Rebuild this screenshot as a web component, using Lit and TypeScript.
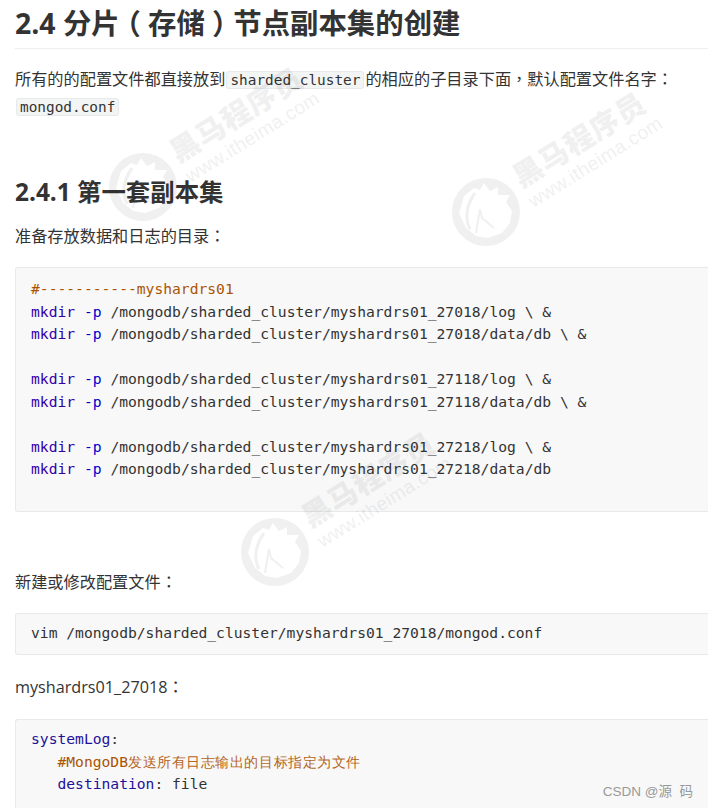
import { LitElement, html, css } from "lit";
import { customElement } from "lit/decorators.js";

const mark = (x: number, y: number) => html`<div class="wm" style="left:${x}px;top:${y}px">
  <svg class="logo" viewBox="0 0 68 68" width="68" height="68">
    <path fill-rule="evenodd" d="M34 0a34 34 0 1 0 0 68a34 34 0 1 0 0-68Z M7 35L12 18L22 10L28 12L32 5L38 13L46 9L46 17L58 17L54 24L60 33L58 45L50 55L36 60L24 58L14 50Z"></path>
    <path d="M23 15C15 26 12 40 18 51" fill="none" stroke="#000" stroke-width="3"></path>
    <path d="M28 31L24 55M28 31L30 40L42 50" fill="none" stroke="#000" stroke-width="2"></path>
  </svg>
  <div class="wmt"><div class="cn">黑马程序员</div><div class="en">www.itheima.com</div></div>
</div>`;

const mk = (rest: string) => html`<span class="k">mkdir</span> <span class="f">-p</span> ${rest}`;

@customElement("app-root")
export class AppRoot extends LitElement {
  static styles = css`
    :host { display: block; width: 708px; height: 808px; overflow: hidden; position: relative; background: #fff; color: #333;
      font-family: "Open Sans", "Noto Sans CJK SC", sans-serif; font-size: 16.2px; }
    .page { padding: 0 0 0 15px; }
    h2 { margin: 0; height: 49px; box-sizing: border-box; padding-top: 8px; font-size: 28.4px; line-height: 30px; font-weight: 700; border-bottom: 1px solid #eee; }
    h3 { margin: 0; padding-top: 55px; font-size: 24.4px; line-height: 34px; font-weight: 700; }
    p { margin: 0; line-height: 26px; }
    .pn { font-family: "Noto Sans CJK TC", sans-serif; }
    .par { display: inline-block; width: 1em; height: 30px; line-height: 30px; vertical-align: top; text-align: center; font-family: "Noto Sans CJK TC", sans-serif; font-feature-settings: "halt"; }
    .p1 { padding-top: 16px; }
    .p2 { padding-top: 13px; }
    .p3 { padding-top: 56px; }
    .p4 { padding-top: 18px; }
    code, pre { font-family: "DejaVu Sans Mono", monospace; }
    code { font-size: 14.4px; background: #f3f4f4; border: 1px solid #e7eaed; border-radius: 3px; padding: 0 3px; margin: 0 1px; }
    pre { margin: 0; background: #f8f8f8; border: 1px solid #e7eaed; border-right: 0; border-radius: 3px 0 0 3px; font-size: 14.65px; line-height: 22.5px; padding: 10px 15px; color: #333; }
    .b1 { margin-top: 18px; height: 245px; box-sizing: border-box; }
    .b2 { margin-top: 18px; height: 42px; box-sizing: border-box; padding-top: 8px; }
    .b3 { margin-top: 19px; height: 100px; box-sizing: border-box; padding-top: 8px; }
    .k { color: #3300aa; }
    .f { color: #0000cc; }
    .c { color: #aa5500; }
    .cc { font-size: 14.4px; letter-spacing: .56px; color: #b5651d; }
    .y { color: #221199; }
    .wm { position: absolute; width: 0; height: 0; opacity: 0.055; pointer-events: none; color: #000; }
    .logo { position: absolute; left: -34px; top: -34px; }
    .wmt { position: absolute; left: 20px; top: -48px; transform: rotate(-32deg); transform-origin: 0 0; white-space: nowrap; }
    .cn { font-size: 29px; line-height: 32px; margin-bottom: 4px; font-weight: 900; letter-spacing: 1px; font-family: "Noto Sans CJK SC", sans-serif; }
    .en { font-size: 19px; line-height: 20px; font-family: "Liberation Sans", sans-serif; letter-spacing: .4px; }
    .csdn { position: absolute; right: 15px; bottom: 7px; color: #999; font-size: 13.5px; line-height: 18px; font-family: "Liberation Sans", "Noto Sans CJK SC", sans-serif; }
  `;
  render() {
    return html`<div class="page">
      <h2>2.4 分片<span class="par">（</span>存储<span class="par">）</span>节点副本集的创建</h2>
      <p class="p1">所有的的配置文件都直接放到<code>sharded_cluster</code>的相应的子目录下面<span class="pn">，</span>默认配置文件名字<span class="pn">：</span><br><code>mongod.conf</code></p>
      <h3>2.4.1 第一套副本集</h3>
      <p class="p2">准备存放数据和日志的目录<span class="pn">：</span></p>
      <pre class="b1"><span class="c">#-----------myshardrs01</span>
${mk("/mongodb/sharded_cluster/myshardrs01_27018/log \\ &")}
${mk("/mongodb/sharded_cluster/myshardrs01_27018/data/db \\ &")}

${mk("/mongodb/sharded_cluster/myshardrs01_27118/log \\ &")}
${mk("/mongodb/sharded_cluster/myshardrs01_27118/data/db \\ &")}

${mk("/mongodb/sharded_cluster/myshardrs01_27218/log \\ &")}
${mk("/mongodb/sharded_cluster/myshardrs01_27218/data/db")}</pre>
      <p class="p3">新建或修改配置文件<span class="pn">：</span></p>
      <pre class="b2">vim /mongodb/sharded_cluster/myshardrs01_27018/mongod.conf</pre>
      <p class="p4">myshardrs01_27018<span class="pn">：</span></p>
      <pre class="b3"><span class="y">systemLog</span>:
   <span class="c">#MongoDB<span class="cc">发送所有日志输出的目标指定为文件</span></span>
   <span class="y">destination</span>: file</pre>
    </div>
    ${mark(143, 187)}${mark(486, 212)}${mark(275, 552)}
    <div class="csdn">CSDN @源&nbsp;&nbsp;码</div>`;
  }
}
